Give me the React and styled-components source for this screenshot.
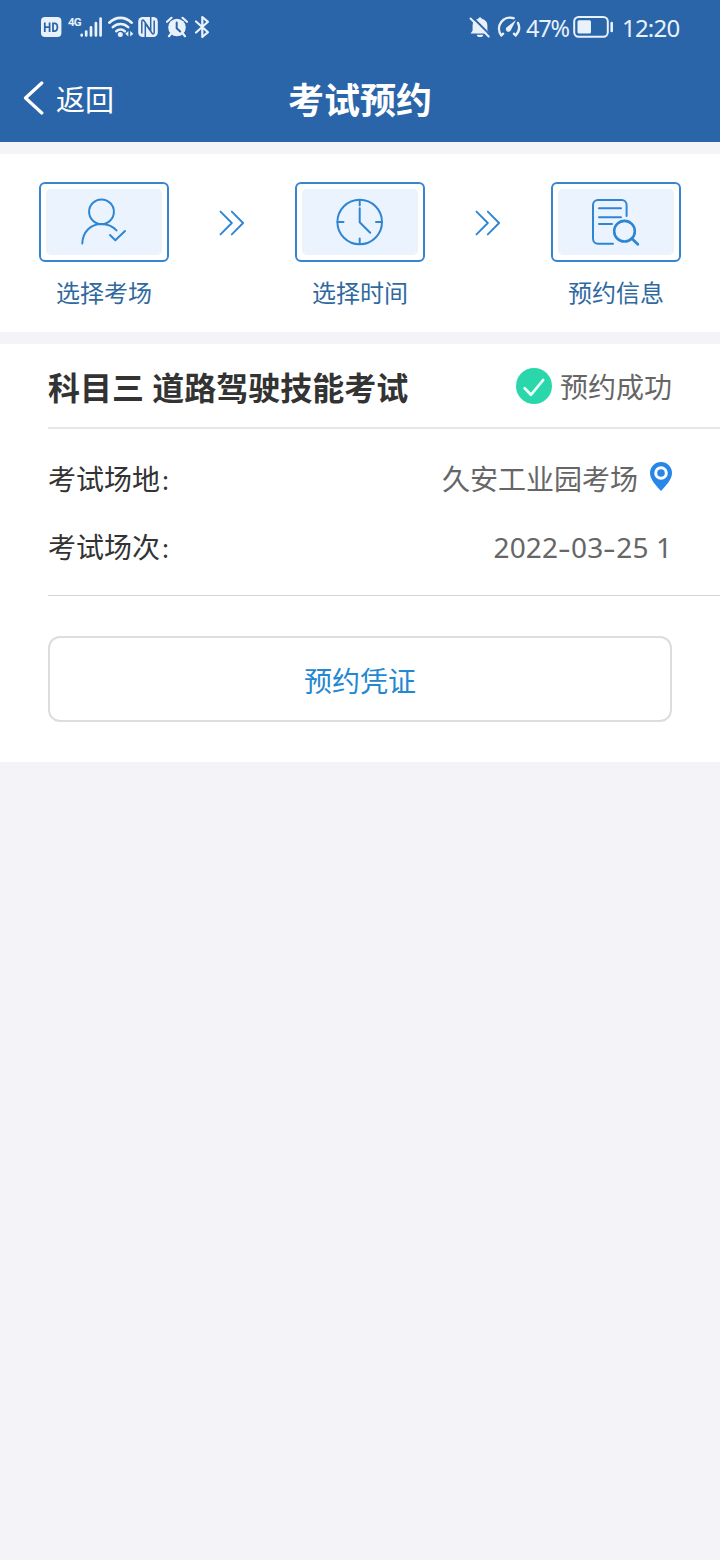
import styled, { createGlobalStyle } from 'styled-components';

const GlobalStyle = createGlobalStyle`
  * {
    box-sizing: border-box;
  }

  body {
    margin: 0;
    background: #f3f3f8;
    font-family: "Noto Sans CJK SC", "Noto Sans", sans-serif;
  }

  svg {
    display: block;
    flex-shrink: 0;
  }
`;

const steps = [
  { label: '选择考场', Icon: PersonIcon },
  { label: '选择时间', Icon: ClockIcon },
  { label: '预约信息', Icon: RecordIcon },
];

function PersonIcon() {
  return (
    <StepSvg width="116" height="66" viewBox="0.5 0 116 66">
      <circle cx="56" cy="22.8" r="12.4" />
      <path d="M36.8 54.5C37.2 42.5 45.5 35 56 35c6 0 11.2 2.3 15 6.4" />
      <path d="M64.5 46l5.3 5.2 9.7-9.2" />
    </StepSvg>
  );
}

function ClockIcon() {
  return (
    <StepSvg width="116" height="66" viewBox="0 0 116 66">
      <circle cx="57.7" cy="33" r="22.3" />
      <path d="M57.7 11v5.5M57.7 49.5V55M35.5 33h6M74 33h6" />
      <path d="M57.7 19.2V33.3l10.5 10.4" />
    </StepSvg>
  );
}

function RecordIcon() {
  return (
    <StepSvg width="116" height="66" viewBox="1 0 116 66">
      <path d="M69.6 27V16a5 5 0 0 0-5-5H41a5 5 0 0 0-5 5v33.8a5 5 0 0 0 5 5h15" />
      <path d="M42 19.2h22M42 28.3h22M42 35h13" />
      <circle cx="67.5" cy="42.2" r="10.3" strokeWidth="2.6" />
      <path d="M74.8 49.6l6 5.6" strokeWidth="2.8" />
    </StepSvg>
  );
}

const HdIcon = () => (
  <svg width="22" height="22" viewBox="0 0 22 22">
    <rect x="1" y="1" width="20.4" height="20" rx="4" fill="#e9f1fb" />
    <path d="M4.8 6.5v9.4M9.6 6.5v9.4M4.8 11.2h4.8M13 7.3v7.8h1.4c2 0 3-1.2 3-3.9s-1-3.9-3-3.9z" fill="none" stroke="#2b65a9" strokeWidth="1.8" />
  </svg>
);

const SignalIcon = () => (
  <svg width="23" height="22" viewBox="0 0 23 22">
    <path d="M1.7 18.9v.6M6.2 15.5v4M11 11.3v8.2M15.9 7v12.5M20.6 2.5v17" stroke="#e9f1fb" strokeWidth="2.7" strokeLinecap="round" />
  </svg>
);

const WifiIcon = () => (
  <svg width="26" height="24" viewBox="0 0 26 24">
    <g fill="none" stroke="#e9f1fb" strokeWidth="2.6" strokeLinecap="round">
      <path d="M1.3 7.7C8 1.200 17 1.200 23.700 7.700" />
      <path d="M4.800 12.100c4.600-4.200 10.800-4.200 15.400 0" />
      <path d="M8.300 16.200c2.500-2.200 6-2.200 8.500 0" />
    </g>
    <circle cx="12.300" cy="19.500" r="2.500" fill="#e9f1fb" />
    <path d="M20.400 16v5.400l-3.200-2.700zM22.200 16v5.400l3.200-2.700z" fill="#e9f1fb" />
  </svg>
);

const NfcIcon = () => (
  <svg width="20" height="22" viewBox="0 0 20 22">
    <rect x="0.200" y="1" width="19.600" height="20" rx="4.500" fill="#e9f1fb" />
    <path d="M7.300 21V7.500l6.800 9.700c1 1.300 2.100.8 2.100-.6V4.500M12.700 1v13.500L5.900 4.800c-1-1.300-2.100-.8-2.100.6v12.100" fill="none" stroke="#2b65a9" strokeWidth="1.500" />
  </svg>
);

const AlarmIcon = () => (
  <svg width="22" height="22" viewBox="0 0 22 22">
    <circle cx="11" cy="11.500" r="8.800" fill="#e9f1fb" />
    <path d="M1 5.800L5.500 1.800M21 5.800L16.500 1.800M4.800 18l-1.800 2.200M17.200 18l1.800 2.200" stroke="#e9f1fb" strokeWidth="2.200" strokeLinecap="round" />
    <path d="M10.700 6.500v5.700l3.500 3.300" fill="none" stroke="#2b65a9" strokeWidth="2" strokeLinecap="round" />
  </svg>
);

const BluetoothIcon = () => (
  <svg width="16" height="24" viewBox="0 0 16 24">
    <path d="M2 6.500L14 17.200 8.300 22V2L14 6.800 2 17.500" fill="none" stroke="#e9f1fb" strokeWidth="2.200" strokeLinejoin="round" strokeLinecap="round" />
  </svg>
);

const MuteIcon = () => (
  <svg width="22" height="24" viewBox="0 0 22 24">
    <path d="M11 2.300a1.800 1.800 0 0 1 1.800 1.500c3.600.8 5.600 3.400 5.600 6.600v5l2 3.200H1.600l2-3.200v-5c0-3.200 2-5.800 5.600-6.600A1.800 1.800 0 0 1 11 2.300z" fill="#e9f1fb" />
    <path d="M7.800 19.800h6.400a3.200 2.300 0 0 1-6.400 0z" fill="#e9f1fb" />
    <path d="M3.500 2.200L22 20.800" stroke="#2b65a9" strokeWidth="2" />
    <path d="M1.500 3.500L19.700 21.500" stroke="#e9f1fb" strokeWidth="2" strokeLinecap="round" />
  </svg>
);

const GaugeIcon = () => (
  <svg width="25" height="24" viewBox="0 0 25 24">
    <g fill="none" stroke="#e9f1fb" strokeWidth="2.400" strokeLinecap="round">
      <path d="M5.300 20.300A11 11 0 0 1 17.600 3.200" />
      <path d="M22 7.900A11 11 0 0 1 19.700 20.300" />
      <path d="M5.300 20.300l1.800-1.600M19.700 20.300l-1.800-1.600" />
    </g>
    <path d="M20 5l-5.300 10.500a2.600 2.600 0 1 1-4-3.200z" fill="#e9f1fb" />
  </svg>
);

const BatteryIcon = () => (
  <svg width="41" height="24" viewBox="0 0 41 24">
    <rect x="1.200" y="2" width="33.600" height="19.800" rx="4.500" fill="none" stroke="#e9f1fb" strokeWidth="2" />
    <rect x="4.500" y="5.300" width="13.500" height="13.200" rx="1.500" fill="#e9f1fb" />
    <rect x="37.400" y="6.800" width="2.600" height="10.500" rx="1.300" fill="#e9f1fb" />
  </svg>
);

const BackIcon = () => (
  <svg width="22" height="34" viewBox="0 0 22 34">
    <path d="M19.800 2L3.500 17l16.300 15" fill="none" stroke="#fff" strokeWidth="3.200" strokeLinecap="round" strokeLinejoin="round" />
  </svg>
);

const ArrowIcon = () => (
  <svg width="26" height="26" viewBox="0 0 26 26">
    <path d="M1.500 1.600L12.800 13 1.500 24.400M12.800 1.600L24.100 13 12.800 24.400" fill="none" stroke="#2e86d3" strokeWidth="1.900" strokeLinecap="round" strokeLinejoin="round" />
  </svg>
);

const SuccessIcon = () => (
  <svg width="36" height="36" viewBox="0 0 36 36">
    <circle cx="18" cy="18" r="18" fill="#2ad7ab" />
    <path d="M8.700 20.300l6.200 6.500L27.200 12" fill="none" stroke="#effffa" strokeWidth="2.700" strokeLinecap="round" strokeLinejoin="round" />
  </svg>
);

const PinIcon = () => (
  <svg width="22" height="29" viewBox="0 0 22 29">
    <path d="M11 0a11 11 0 0 1 11 11c0 6.500-6 12.500-11 18C6 23.500 0 17.500 0 11A11 11 0 0 1 11 0z" fill="#2786e8" />
    <circle cx="11" cy="11" r="5.300" fill="none" stroke="#fff" strokeWidth="3" />
  </svg>
);

const App = () => (
  <Page>
    <GlobalStyle />
    <Header>
      <StatusBar>
        <StatusGroup $gap={5}>
          <HdIcon />
          <Network>4G</Network>
          <SignalIcon />
          <Connections>
            <WifiIcon />
            <NfcIcon />
          </Connections>
          <Connections $wide>
            <AlarmIcon />
            <BluetoothIcon />
          </Connections>
        </StatusGroup>
        <StatusGroup $gap={5}>
          <MuteIcon />
          <GaugeIcon />
          <Percent>47%</Percent>
          <BatteryIcon />
          <Time>12:20</Time>
        </StatusGroup>
      </StatusBar>
      <NavBar>
        <Back>
          <BackIcon />
          <span>返回</span>
        </Back>
        <Title>考试预约</Title>
      </NavBar>
    </Header>

    <Steps>
      {steps.map(({ label, Icon }, index) => (
        <StepGroup key={label}>
          {index > 0 && (
            <Arrow>
              <ArrowIcon />
            </Arrow>
          )}
          <Step>
            <StepBox>
              <Icon />
            </StepBox>
            <StepLabel>{label}</StepLabel>
          </Step>
        </StepGroup>
      ))}
    </Steps>

    <Card>
      <CardHeader>
        <Subject>科目三 道路驾驶技能考试</Subject>
        <Status>
          <SuccessIcon />
          <span>预约成功</span>
        </Status>
      </CardHeader>
      <Details>
        <Row>
          <Label>考试场地<Colon>:</Colon></Label>
          <Place>
            <span>久安工业园考场</span>
            <PinIcon />
          </Place>
        </Row>
        <Row>
          <Label>考试场次<Colon>:</Colon></Label>
          <Session>
            2022<Dash>-</Dash>03<Dash>-</Dash>25 1
          </Session>
        </Row>
      </Details>
      <VoucherButton>预约凭证</VoucherButton>
    </Card>
  </Page>
);

const Page = styled.div`
  width: 720px;
  min-height: 1560px;
  background: #f3f3f8;
`;

const Header = styled.header`
  height: 142px;
  background: #2b65a9;
  color: #fff;
`;

const StatusBar = styled.div`
  display: flex;
  justify-content: space-between;
  height: 54px;
  padding: 0 41px 0 40px;
`;

const StatusGroup = styled.div`
  display: flex;
  align-items: center;
  gap: ${({ $gap }) => $gap}px;
  color: #e9f1fb;
`;

const Connections = styled.div`
  display: flex;
  align-items: center;
  gap: ${({ $wide }) => ($wide ? 6 : 4)}px;
  margin-left: ${({ $wide }) => ($wide ? 3 : 0)}px;
`;

const Network = styled.span`
  width: 12px;
  margin: 0 -5px 11px 1px;
  font: bold 11.5px/12px "Roboto", sans-serif;
  letter-spacing: -0.8px;
`;

const Percent = styled.span`
  width: 42px;
  padding-top: 1px;
  font: 23.5px/54px "Noto Sans", sans-serif;
  letter-spacing: -1.2px;
`;

const Time = styled.span`
  width: 57px;
  margin-left: 3px;
  padding-top: 1px;
  font: 24px/54px "Noto Sans", sans-serif;
  letter-spacing: -0.8px;
`;

const NavBar = styled.div`
  display: grid;
  grid-template-columns: 1fr auto 1fr;
  align-items: center;
  height: 88px;
  padding: 0 22px;
`;

const Back = styled.div`
  display: flex;
  align-items: center;
  gap: 12px;
  font-size: 29px;
  line-height: 40px;
`;

const Title = styled.h1`
  margin: 0;
  font-size: 36px;
  font-weight: bold;
  line-height: 52px;
`;

const Steps = styled.section`
  display: flex;
  justify-content: center;
  height: 178px;
  margin-top: 12px;
  padding-top: 28px;
  background: #fff;
`;

const StepGroup = styled.div`
  display: flex;
`;

const Step = styled.div`
  width: 130px;
  text-align: center;
`;

const StepBox = styled.div`
  display: flex;
  height: 80px;
  padding: 5px;
  border: 2px solid #3486cf;
  border-radius: 6px;
`;

const StepSvg = styled.svg`
  border-radius: 5px;
  background: #ebf3ff;
  fill: none;
  stroke: #2e86d3;
  stroke-width: 2px;
  stroke-linecap: round;
  stroke-linejoin: round;
`;

const StepLabel = styled.div`
  margin-top: 12px;
  color: #2f699f;
  font-size: 24px;
  line-height: 36px;
`;

const Arrow = styled.div`
  display: flex;
  align-items: center;
  justify-content: center;
  width: 126px;
  height: 82px;
`;

const Card = styled.section`
  height: 418px;
  margin-top: 12px;
  padding-left: 48px;
  background: #fff;
`;

const CardHeader = styled.div`
  display: flex;
  align-items: center;
  justify-content: space-between;
  height: 85px;
  padding-right: 48px;
  border-bottom: 2px solid #e5e5e5;
`;

const Subject = styled.h2`
  margin: 0;
  color: #333;
  font-size: 32px;
  font-weight: bold;
  line-height: 44px;
  word-spacing: 1px;
`;

const Status = styled.div`
  display: flex;
  align-items: center;
  gap: 8px;
  color: #666;
  font-size: 28px;
  line-height: 40px;

  span {
    margin-top: 1px;
  }
`;

const Details = styled.div`
  height: 167px;
  padding: 15px 48px 0 0;
  border-bottom: 1px solid #d5d5d5;
`;

const Row = styled.div`
  display: flex;
  align-items: center;
  justify-content: space-between;
  height: 68px;
  font-size: 28px;
  line-height: 40px;
`;

const Label = styled.span`
  padding-top: 2px;
  color: #333;
`;

const Colon = styled.span`
  margin-left: 2px;
  font-family: "Noto Sans", sans-serif;
  font-size: 26px;
`;

const Place = styled.span`
  display: flex;
  align-items: center;
  gap: 12px;
  color: #666;

  svg {
    margin-bottom: 3px;
  }
`;

const Session = styled.span`
  margin-top: 2px;
  color: #666;
  font-family: "Noto Sans", sans-serif;
  letter-spacing: 0.1px;
`;

const Dash = styled.span`
  display: inline-block;
  width: 13px;
  text-align: center;
  transform: scaleX(1.4);
`;

const VoucherButton = styled.button`
  display: block;
  width: 624px;
  height: 86px;
  margin-top: 40px;
  padding: 1px 0 0;
  border: 2px solid #ddd;
  border-radius: 12px;
  background: #fff;
  color: #2388d1;
  font-family: inherit;
  font-size: 28px;
`;

export default App;
